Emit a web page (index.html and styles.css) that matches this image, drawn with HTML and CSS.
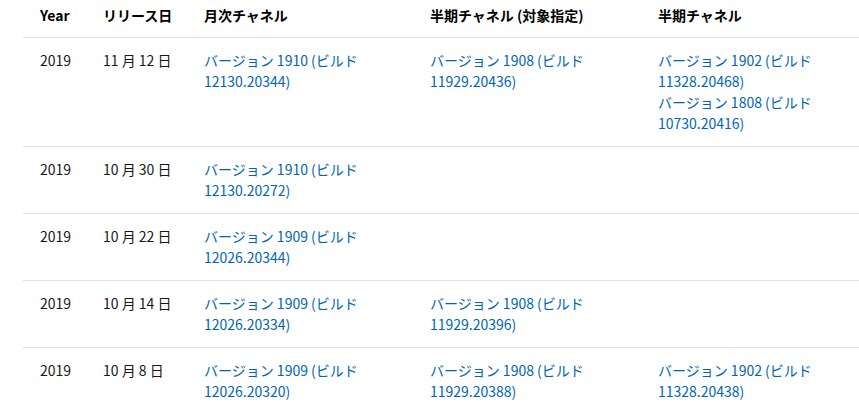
FILE: index.html
```html
<!DOCTYPE html>
<html lang="ja">
<head>
<meta charset="utf-8">
<title>リリース履歴</title>
<link rel="stylesheet" href="styles.css">
</head>
<body>
<table class="releases">
  <colgroup>
    <col class="c-year">
    <col class="c-date">
    <col class="c-month">
    <col class="c-semi-t">
    <col class="c-semi">
  </colgroup>
  <thead>
    <tr>
      <th>Year</th>
      <th>リリース日</th>
      <th>月次チャネル</th>
      <th>半期チャネル (対象指定)</th>
      <th>半期チャネル</th>
    </tr>
  </thead>
  <tbody>
    <tr>
      <td>2019</td>
      <td class="date">11 月 12 日</td>
      <td><a href="#">バージョン 1910 (ビルド 12130.20344)</a></td>
      <td><a href="#">バージョン 1908 (ビルド 11929.20436)</a></td>
      <td><a href="#">バージョン 1902 (ビルド 11328.20468)</a><br><a href="#">バージョン 1808 (ビルド 10730.20416)</a></td>
    </tr>
    <tr>
      <td>2019</td>
      <td class="date">10 月 30 日</td>
      <td><a href="#">バージョン 1910 (ビルド 12130.20272)</a></td>
      <td></td>
      <td></td>
    </tr>
    <tr>
      <td>2019</td>
      <td class="date">10 月 22 日</td>
      <td><a href="#">バージョン 1909 (ビルド 12026.20344)</a></td>
      <td></td>
      <td></td>
    </tr>
    <tr>
      <td>2019</td>
      <td class="date">10 月 14 日</td>
      <td><a href="#">バージョン 1909 (ビルド 12026.20334)</a></td>
      <td><a href="#">バージョン 1908 (ビルド 11929.20396)</a></td>
      <td></td>
    </tr>
    <tr>
      <td>2019</td>
      <td class="date">10 月 8 日</td>
      <td><a href="#">バージョン 1909 (ビルド 12026.20320)</a></td>
      <td><a href="#">バージョン 1908 (ビルド 11929.20388)</a></td>
      <td><a href="#">バージョン 1902 (ビルド 11328.20438)</a></td>
    </tr>
  </tbody>
</table>
</body>
</html>
```

FILE: styles.css
```css
html, body {
  margin: 0;
  padding: 0;
  background: #ffffff;
  overflow: hidden;
}

body {
  font-family: "Noto Sans CJK JP", "Noto Sans", sans-serif;
  font-size: 14px;
  line-height: 21px;
  color: #171717;
}

.releases {
  margin-left: 23px;
  width: 836px;
  table-layout: fixed;
  border-collapse: collapse;
}

.c-year { width: 63px; }
.c-date { width: 101px; }
.c-month { width: 226px; }
.c-semi-t { width: 228px; }
.c-semi { width: 218px; }

.releases th {
  text-align: left;
  font-weight: 700;
  color: #000000;
  padding: 5px 17px 11px;
  border-bottom: 1px solid #e3e3e3;
  white-space: nowrap;
}

.releases td {
  vertical-align: top;
  padding: 12px 17px;
  border-bottom: 1px solid #e3e3e3;
}

.releases td.date {
  white-space: nowrap;
}

.releases a {
  color: #0065b3;
  text-decoration: none;
}
```
